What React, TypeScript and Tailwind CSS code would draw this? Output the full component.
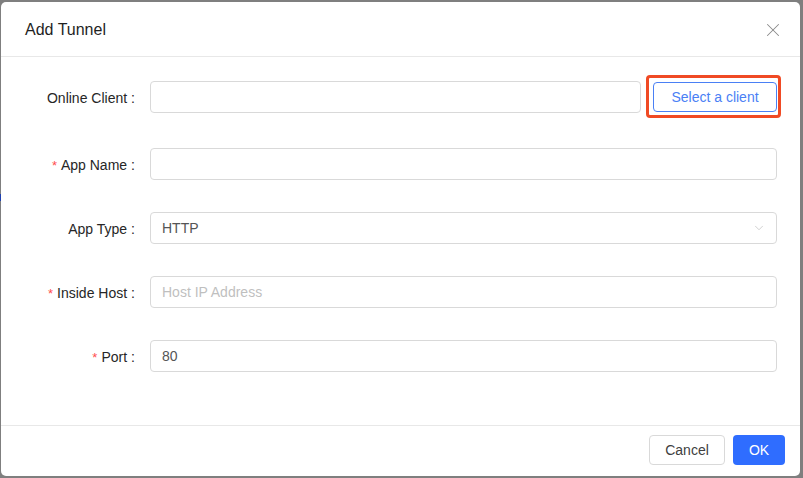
import { ChevronDown, X } from "lucide-react";

const rows = [
	{ label: "App Name", required: true, value: "", placeholder: "" },
	{ label: "App Type", required: false, select: true, value: "HTTP" },
	{ label: "Inside Host", required: true, value: "", placeholder: "Host IP Address" },
	{ label: "Port", required: true, value: "80", placeholder: "" },
];

function Label({ text, required }: { text: string; required?: boolean }) {
	return (
		<div className="w-[149px] shrink-0 flex items-center justify-end pr-[15px] pt-[2px] text-[14px] text-[#262626]">
			{required && <span className="text-[#ff4d4f] text-[13px] mr-[4px] leading-none">*</span>}
			<span>{text}</span>
			<span className="ml-[4px]">:</span>
		</div>
	);
}

export default function App() {
	return (
		<div
			className="relative w-[803px] h-[478px] bg-[#7f7f7f] pt-[2px] pl-[1px] pr-[3px] pb-[2px]"
			style={{ fontFamily: '"Liberation Sans", Arial, sans-serif' }}
		>
			<div className="absolute left-0 top-[194px] w-[1px] h-[7px] bg-[#1e40af]" />
			<div className="w-[799px] h-[474px] bg-white rounded-[5px] flex flex-col">
				{/* Header */}
				<div className="h-[55px] shrink-0 border-b border-[#e8e8e8] flex items-center justify-between pl-[24px] pr-[16px] pt-[1px]">
					<span className="text-[16px] text-[#1f1f1f]">Add Tunnel</span>
					<X size={22} strokeWidth={1.1} className="text-[#8a8a8a]" />
				</div>

				{/* Body */}
				<div className="flex-1 flex flex-col pt-[24px]">
					<div className="flex items-center h-[32px]">
						<Label text="Online Client" />
						<div className="w-[491px] h-[32px] border border-[#d9d9d9] rounded-[4px]" />
						<div className="relative ml-[12px]">
							<div className="absolute -left-[7px] -right-[4px] -top-[7px] -bottom-[6px] border-[3px] border-[#f04a24] rounded-[4px]" />
							<button className="relative w-[124px] h-[30px] border border-[#4a80f5] rounded-[4px] bg-white text-[14px] text-[#4a80f5]">
								Select a client
							</button>
						</div>
					</div>

					<div className="flex flex-col gap-[32px] mt-[35px]">
						{rows.map((row) => (
							<div key={row.label} className="flex items-center h-[32px]">
								<Label text={row.label} required={row.required} />
								<div className="w-[627px] h-[32px] border border-[#d9d9d9] rounded-[4px] flex items-center justify-between pl-[11px] pr-[10px] text-[14px]">
									{row.value ? (
										<span className="text-[#555]">{row.value}</span>
									) : (
										<span className="text-[#bfbfbf]">{row.placeholder}</span>
									)}
									{row.select && <ChevronDown size={14} strokeWidth={1.2} className="text-[#bfbfbf]" />}
								</div>
							</div>
						))}
					</div>
				</div>

				{/* Footer */}
				<div className="h-[51px] shrink-0 border-t border-[#e8e8e8] flex items-start justify-end gap-[8px] pt-[9px] pr-[15px]">
					<button className="w-[76px] h-[30px] border border-[#d9d9d9] rounded-[4px] bg-white text-[14px] text-[#404040]">
						Cancel
					</button>
					<button className="w-[52px] h-[30px] rounded-[4px] bg-[#2f6dff] text-[14px] text-white">
						OK
					</button>
				</div>
			</div>
		</div>
	);
}
